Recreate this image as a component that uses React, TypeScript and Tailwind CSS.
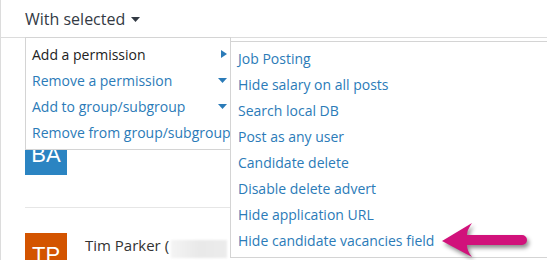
import React from 'react'

const mainItems = [
  { label: 'Add a permission', active: true, arrow: 'right' },
  { label: 'Remove a permission', active: false, arrow: 'down' },
  { label: 'Add to group/subgroup', active: false, arrow: 'down' },
  { label: 'Remove from group/subgroup', active: false, arrow: null },
]

const permissions = [
  'Job Posting',
  'Hide salary on all posts',
  'Search local DB',
  'Post as any user',
  'Candidate delete',
  'Disable delete advert',
  'Hide application URL',
  'Hide candidate vacancies field',
]

function Caret({ dir, className }: { dir: string; className?: string }) {
  if (dir === 'right') {
    return (
      <svg width="6" height="8" viewBox="0 0 6 8" className={className}>
        <path d="M0 0 L6 4 L0 8 Z" fill="currentColor" />
      </svg>
    )
  }
  return (
    <svg width="9" height="5" viewBox="0 0 9 5" className={className}>
      <path d="M0 0 L9 0 L4.5 5 Z" fill="currentColor" />
    </svg>
  )
}

function Avatar({ initials, color }: { initials: string; color: string }) {
  return (
    <div
      className={`flex h-[42px] w-[42px] shrink-0 items-center justify-center text-[22px] text-white font-['Liberation_Sans',sans-serif] ${color}`}
    >
      {initials}
    </div>
  )
}

export default function App() {
  return (
    <div className="relative h-[260px] w-[547px] overflow-hidden border-l border-[#dcdcdc] bg-white font-['Open_Sans',sans-serif]">
      {/* Header */}
      <div className="flex h-[38px] items-center border-b border-[#dcdcdc] pl-6">
        <span className="text-[16px] text-[#333a44]">With selected</span>
        <Caret dir="down" className="ml-[6px] mt-[1px] text-[#333a44]" />
      </div>

      {/* List underneath */}
      <div className="pl-6">
        <div className="flex w-[300px] gap-[18px] border-b border-[#e6e6e6] pb-[32px] pt-[95px]">
          <Avatar initials="BA" color="bg-[#2b84c2]" />
          <span className="-mt-[6px] text-[15px] text-[#333]">Ben Appleyard (</span>
        </div>
        <div className="flex gap-[18px] pt-[25px]">
          <Avatar initials="TP" color="bg-[#d35400]" />
          <div className="flex items-start pt-[1px]">
            <span className="text-[15px] text-[#333]">Tim Parker (</span>
            <span className="ml-[2px] mt-[6px] h-[18px] w-[56px] bg-gradient-to-r from-[#f4f4f4] via-[#e9e9e9] to-[#ececec] blur-[1px]" />
          </div>
        </div>
      </div>

      {/* Main dropdown */}
      <div className="absolute left-[24px] top-[37px] w-[206px] border border-[#d4d4d4] bg-white pb-[4px] pt-[3px]">
        {mainItems.map((item) => (
          <div
            key={item.label}
            className={`flex h-[26px] items-center justify-between whitespace-nowrap pl-[6px] pr-[3px] text-[14px] ${
              item.active ? 'text-[#222]' : 'text-[#2b7bb8]'
            }`}
          >
            <span>{item.label}</span>
            {item.arrow && <Caret dir={item.arrow} className="text-[#2b7bb8]" />}
          </div>
        ))}
      </div>

      {/* Sub menu */}
      <div className="absolute left-[229px] top-[41px] w-[340px] border border-[#d4d4d4] bg-white pb-[4px] pt-[3px]">
        {permissions.map((p) => (
          <div key={p} className="flex h-[26px] items-center pl-[7px] text-[14px] text-[#2b7bb8]">
            {p}
          </div>
        ))}
      </div>

      {/* Pointer arrow */}
      <svg
        width="92"
        height="42"
        viewBox="0 0 92 42"
        className="absolute left-[438px] top-[220px] drop-shadow-[2px_3px_2px_rgba(0,0,0,0.45)]"
      >
        <path
          d="M3 21 L33 3 Q28 10 28 15 L83 15 A5 5 0 0 1 83 25 L28 25 Q28 31 33 37 Z"
          fill="#d1127b"
        />
      </svg>
    </div>
  )
}
